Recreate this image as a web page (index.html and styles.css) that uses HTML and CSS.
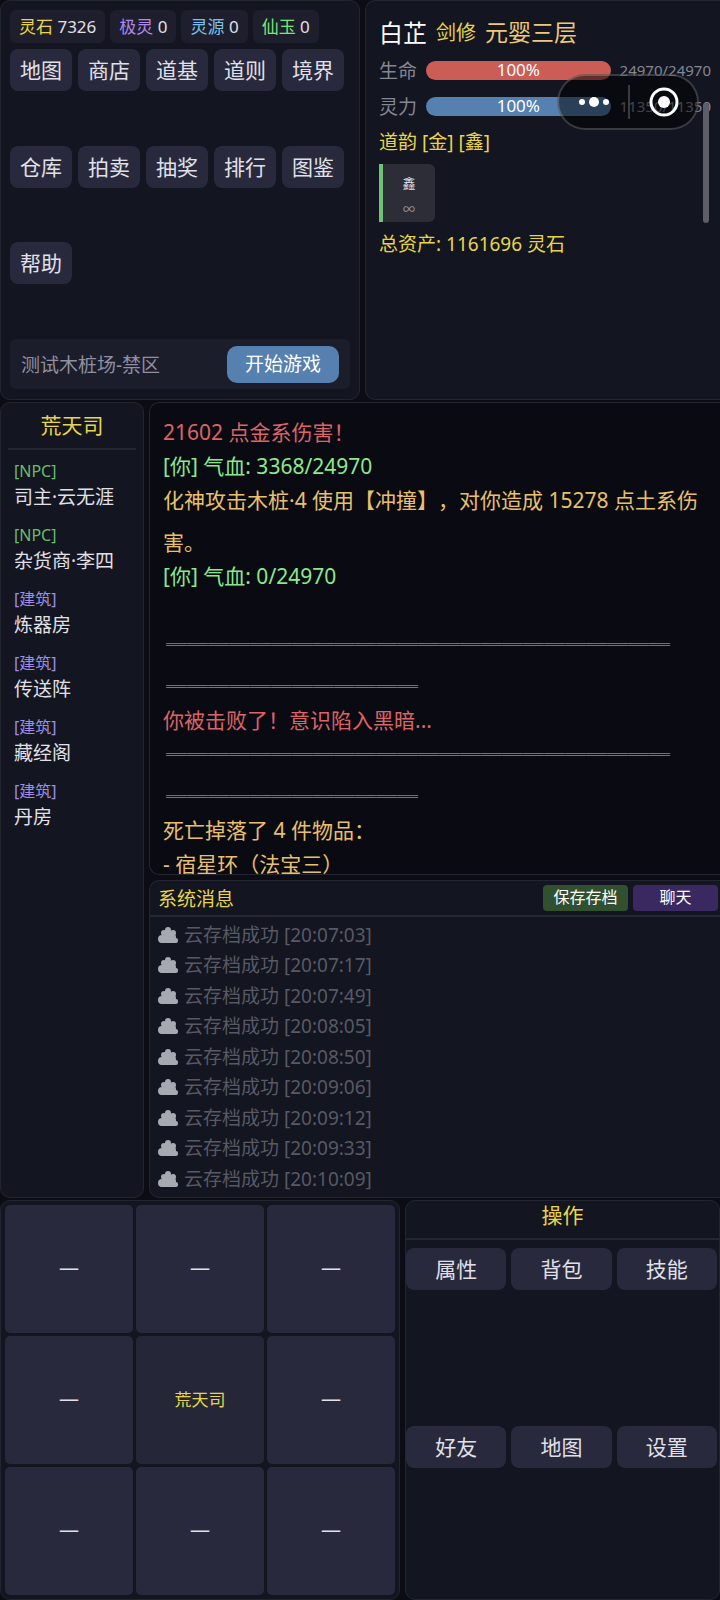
FILE: index.html
```html
<!DOCTYPE html>
<html lang="zh-CN">
<head>
    <meta charset="UTF-8">
    <meta name="viewport" content="width=device-width, initial-scale=1.0">
    <title>荒天司</title>
    <link rel="stylesheet" href="styles.css">
</head>
<body>
    <svg width="0" height="0" class="sprite">
        <symbol id="cloud" viewBox="0 0 20 18">
            <circle cx="10" cy="4" r="3"/>
            <circle cx="6" cy="7" r="3"/>
            <circle cx="15" cy="7" r="3"/>
            <circle cx="4" cy="13" r="4"/>
            <circle cx="15" cy="11" r="3"/>
            <rect x="5" y="5" width="11" height="12"/>
            <rect x="2" y="12" width="18" height="5" rx="2"/>
        </symbol>
    </svg>

    <div class="game">
        <!-- Top -->
        <div class="row top">
            <section class="panel menu">
                <div class="currency">
                    <span class="chip"><b class="yellow">灵石</b> 7326</span>
                    <span class="chip"><b class="purple">极灵</b> 0</span>
                    <span class="chip"><b class="blue">灵源</b> 0</span>
                    <span class="chip"><b class="green">仙玉</b> 0</span>
                </div>
                <div class="menu-buttons">
                    <button class="btn">地图</button>
                    <button class="btn">商店</button>
                    <button class="btn">道基</button>
                    <button class="btn">道则</button>
                    <button class="btn">境界</button>
                    <button class="btn">仓库</button>
                    <button class="btn">拍卖</button>
                    <button class="btn">抽奖</button>
                    <button class="btn">排行</button>
                    <button class="btn">图鉴</button>
                    <button class="btn">帮助</button>
                </div>
                <div class="start-bar">
                    <span>测试木桩场-禁区</span>
                    <button class="start">开始游戏</button>
                </div>
            </section>

            <section class="panel flush player">
                <div class="player-name">
                    <span class="name">白芷</span>
                    <span class="job">剑修</span>
                    <span class="realm">元婴三层</span>
                </div>
                <div class="stat">
                    <span class="stat-label">生命</span>
                    <div class="bar hp">100%</div>
                    <span class="stat-value">24970/24970</span>
                </div>
                <div class="stat">
                    <span class="stat-label">灵力</span>
                    <div class="bar mp">100%</div>
                    <span class="stat-value">11350/11350</span>
                </div>
                <p class="line">道韵 [金] [鑫]</p>
                <div class="buff">
                    <span>鑫</span>
                    <small>∞</small>
                </div>
                <p class="line">总资产: 1161696 灵石</p>
                <div class="scrollbar"></div>
            </section>
        </div>

        <!-- Middle -->
        <div class="row middle">
            <section class="panel place">
                <h2 class="place-title">荒天司</h2>
                <ul class="entities">
                    <li><span class="tag npc">[NPC]</span>司主·云无涯</li>
                    <li><span class="tag npc">[NPC]</span>杂货商·李四</li>
                    <li><span class="tag">[建筑]</span>炼器房</li>
                    <li><span class="tag">[建筑]</span>传送阵</li>
                    <li><span class="tag">[建筑]</span>藏经阁</li>
                    <li><span class="tag">[建筑]</span>丹房</li>
                </ul>
            </section>

            <div class="messages">
                <section class="panel flush battle">
                    <p class="red">21602 点金系伤害！</p>
                    <p class="heal">[你] 气血: 3368/24970</p>
                    <p>化神攻击木桩·4 使用【冲撞】，对你造成 15278 点土系伤害。</p>
                    <p class="heal">[你] 气血: 0/24970</p>
                    <p>&nbsp;</p>
                    <p class="red rule">════════════════════════<br>════════════</p>
                    <p class="red">你被击败了！意识陷入黑暗...</p>
                    <p class="red rule">════════════════════════<br>════════════</p>
                    <p>死亡掉落了 4 件物品：</p>
                    <p>- 宿星环（法宝三）</p>
                </section>

                <section class="panel flush system">
                    <div class="system-head">
                        <h2>系统消息</h2>
                        <button class="small-btn save">保存存档</button>
                        <button class="small-btn chat">聊天</button>
                    </div>
                    <ul class="system-list">
                        <li><svg><use href="#cloud"/></svg>云存档成功 [20:07:03]</li>
                        <li><svg><use href="#cloud"/></svg>云存档成功 [20:07:17]</li>
                        <li><svg><use href="#cloud"/></svg>云存档成功 [20:07:49]</li>
                        <li><svg><use href="#cloud"/></svg>云存档成功 [20:08:05]</li>
                        <li><svg><use href="#cloud"/></svg>云存档成功 [20:08:50]</li>
                        <li><svg><use href="#cloud"/></svg>云存档成功 [20:09:06]</li>
                        <li><svg><use href="#cloud"/></svg>云存档成功 [20:09:12]</li>
                        <li><svg><use href="#cloud"/></svg>云存档成功 [20:09:33]</li>
                        <li><svg><use href="#cloud"/></svg>云存档成功 [20:10:09]</li>
                    </ul>
                </section>
            </div>
        </div>

        <!-- Bottom -->
        <div class="row bottom">
            <section class="panel compass">
                <button class="cell">—</button>
                <button class="cell">—</button>
                <button class="cell">—</button>
                <button class="cell">—</button>
                <button class="cell here">荒天司</button>
                <button class="cell">—</button>
                <button class="cell">—</button>
                <button class="cell">—</button>
                <button class="cell">—</button>
            </section>

            <section class="panel actions">
                <h2 class="actions-title">操作</h2>
                <div class="action-grid">
                    <button class="btn">属性</button>
                    <button class="btn">背包</button>
                    <button class="btn">技能</button>
                    <button class="btn">好友</button>
                    <button class="btn">地图</button>
                    <button class="btn">设置</button>
                </div>
            </section>
        </div>
    </div>

    <!-- Floating capsule over the page -->
    <div class="capsule">
        <button aria-label="更多">
            <svg width="30" height="12" viewBox="0 0 30 12">
                <circle cx="3" cy="6" r="3"/>
                <circle cx="15" cy="6" r="5"/>
                <circle cx="27" cy="6" r="3"/>
            </svg>
        </button>
        <button aria-label="关闭">
            <svg width="30" height="30" viewBox="0 0 30 30">
                <circle cx="15" cy="15" r="13" fill="none" stroke="#fff" stroke-width="3"/>
                <circle cx="15" cy="15" r="6"/>
            </svg>
        </button>
    </div>
</body>
</html>
```
FILE: styles.css
```css
* {
    box-sizing: border-box;
}

body {
    margin: 0;
    background: #0b0c14;
    color: #e0e0e8;
    font-family: "Noto Sans", "Noto Sans CJK SC", sans-serif;
    font-size: 19px;
    text-spacing-trim: space-all;
}

h2, p, ul {
    margin: 0;
    padding: 0;
    font-size: inherit;
    font-weight: inherit;
    list-style: none;
}

b {
    font-weight: inherit;
}

button {
    border: none;
    padding: 0;
    color: inherit;
    font: inherit;
    cursor: pointer;
}

.sprite {
    position: absolute;
}

.game {
    height: 100vh;
    display: grid;
    grid-template-rows: 25% 1fr 25%;
    gap: 2px;
}

.row {
    display: grid;
    column-gap: 5px;
    min-height: 0;
}

.top {
    grid-template-columns: 1fr 355px;
}

.middle {
    grid-template-columns: 20% 1fr;
}

.bottom {
    grid-template-columns: 400px 1fr;
}

.panel {
    background: #131520;
    border: 1px solid #232531;
    border-radius: 10px;
    min-width: 0;
    min-height: 0;
}

.flush {
    border-right: none;
    border-radius: 10px 0 0 10px;
}

.yellow { color: #e8d648; }
.purple { color: #b088ea; }
.blue { color: #78c2ee; }
.green { color: #7ae67a; }
.red { color: #dc6468; }
.heal { color: #8ce88c; }

/* Menu */
.menu {
    display: flex;
    flex-direction: column;
    padding: 9px 9px 10px;
}

.currency {
    display: flex;
    gap: 5px;
    margin-bottom: 6px;
}

.chip {
    padding: 0 9px;
    border-radius: 6px;
    background: #1f1e2d;
    font-size: 17px;
    line-height: 33px;
}

.menu-buttons {
    flex: 1;
    display: flex;
    flex-wrap: wrap;
    align-items: flex-start;
    gap: 6px;
    margin-bottom: 6px;
}

.btn {
    height: 42px;
    padding: 0 10px;
    border-radius: 8px;
    background: #28293d;
    font-size: 21px;
    line-height: 40px;
}

.start-bar {
    display: flex;
    align-items: center;
    justify-content: space-between;
    height: 50px;
    padding: 0 11px;
    border-radius: 6px;
    background: #1c1d2b;
    color: #9090a0;
}

.start {
    height: 37px;
    padding: 0 18px;
    border-radius: 10px;
    background: #5580b0;
    color: #fff;
    line-height: 36px;
}

/* Player */
.player {
    position: relative;
    padding: 9px 9px 9px 13px;
}

.player-name {
    display: flex;
    align-items: center;
    gap: 9px;
    height: 42px;
}

.name {
    font-size: 24px;
    color: #fff;
}

.job {
    font-size: 20px;
    color: #e8d648;
}

.realm {
    font-size: 23px;
    color: #ecc878;
}

.stat {
    display: flex;
    align-items: center;
    gap: 9px;
    height: 36px;
    color: #858694;
}

.stat-label {
    flex: none;
}

.bar {
    flex: 1;
    height: 19px;
    border-radius: 10px;
    color: #fff;
    font-size: 17px;
    line-height: 18px;
    text-align: center;
}

.hp { background: #cc5c56; }
.mp { background: #5580b0; }

.stat-value {
    flex: none;
    font-size: 15px;
}

.line {
    color: #e8d648;
    line-height: 36px;
}

.buff {
    display: flex;
    flex-direction: column;
    align-items: center;
    justify-content: space-between;
    width: 56px;
    height: 58px;
    margin: 4px 0;
    padding: 9px 0 2px;
    border-left: 4px solid #6fc276;
    border-radius: 0 6px 6px 0;
    background: #2d2d37;
    font-size: 13px;
    line-height: 20px;
}

.buff small {
    color: #9a9aa4;
    font-size: 12px;
}

.scrollbar {
    position: absolute;
    top: 102px;
    right: 11px;
    width: 6px;
    height: 120px;
    border-radius: 3px;
    background: #5d5e67;
}

/* Place */
.place {
    padding: 0 7px;
}

.place-title {
    border-bottom: 2px solid #242632;
    color: #e8d648;
    font-size: 21px;
    line-height: 45px;
    text-align: center;
}

.entities {
    padding: 8px 6px;
}

.entities li {
    margin-bottom: 12px;
    line-height: 26px;
    white-space: nowrap;
}

.tag {
    display: block;
    color: #a08ce4;
    font-size: 16px;
}

.npc {
    color: #6cbc6c;
}

/* Messages */
.messages {
    display: grid;
    grid-template-rows: 1fr 40%;
    gap: 5px;
    min-width: 0;
    min-height: 0;
}

.battle {
    padding: 8px 6px 0 13px;
    overflow: hidden;
    background: #0a0b12;
    color: #e8c06c;
    font-size: 21px;
    line-height: 42px;
}

/* wrapped lines keep the tall line height, entries sit closer */
.battle p {
    margin-bottom: -8px;
}

.battle .rule {
    padding-left: 3px;
    font-weight: bold;
    white-space: nowrap;
}

.system {
    display: flex;
    flex-direction: column;
}

.system-head {
    display: flex;
    align-items: center;
    gap: 5px;
    height: 36px;
    padding: 0 2px 0 8px;
    border-bottom: 2px solid #242632;
}

.system-head h2 {
    flex: 1;
    color: #e8d648;
}

.small-btn {
    width: 85px;
    height: 26px;
    border-radius: 4px;
    color: #fff;
    font-size: 16px;
    line-height: 25px;
}

.save { background: #305030; }
.chat { background: #3a2860; }

.system-list {
    flex: 1;
    display: flex;
    flex-direction: column;
    padding: 3px 8px;
    color: #585964;
}

.system-list li {
    flex: 1;
    display: flex;
    align-items: center;
    gap: 6px;
    line-height: 30px;
}

.system-list svg {
    width: 20px;
    height: 18px;
    fill: #a6a9b2;
}

/* Compass */
.compass {
    display: grid;
    grid-template-columns: repeat(3, 1fr);
    grid-template-rows: repeat(3, 1fr);
    gap: 3px;
    padding: 4px;
}

.cell {
    padding-bottom: 3px;
    border-radius: 5px;
    background: #28293d;
    font-size: 20px;
}

.here {
    background: #252738;
    color: #e8d648;
    font-size: 17px;
}

/* Actions */
.actions {
    display: flex;
    flex-direction: column;
}

.actions-title {
    height: 39px;
    margin-bottom: 8px;
    border-bottom: 2px solid #242632;
    color: #e8d648;
    font-size: 21px;
    line-height: 28px;
    text-align: center;
}

.action-grid {
    flex: 1;
    display: grid;
    grid-template-columns: repeat(3, 1fr);
    gap: 5px;
    padding-right: 2px;
}

/* Capsule */
.capsule {
    position: absolute;
    top: 74px;
    right: 21px;
    display: grid;
    grid-template-columns: 1fr 1fr;
    width: 142px;
    height: 56px;
    border: 2px solid rgba(255, 255, 255, 0.2);
    border-radius: 28px;
    background: rgba(0, 0, 0, 0.5);
}

.capsule button {
    display: flex;
    align-items: center;
    justify-content: center;
    margin: 9px 0;
    background: none;
}

.capsule button + button {
    border-left: 2px solid rgba(255, 255, 255, 0.2);
}

.capsule svg {
    fill: #fff;
}
```
